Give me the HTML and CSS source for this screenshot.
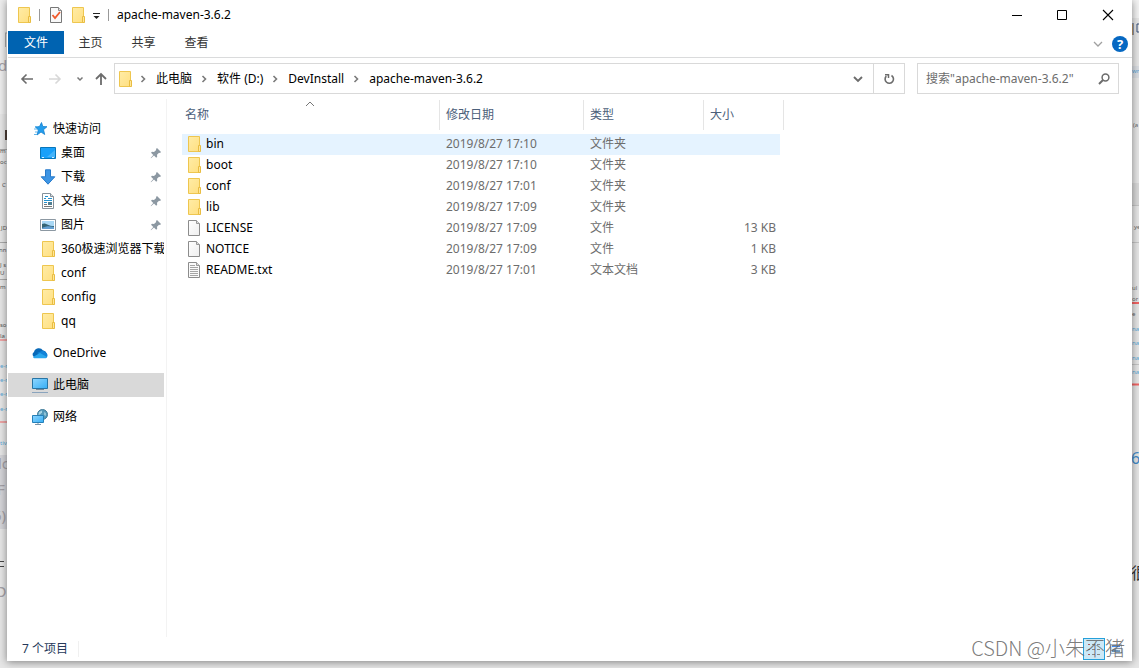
FILE: index.html
```html
<!DOCTYPE html>
<html lang="zh-CN">
<head>
<meta charset="utf-8">
<title>apache-maven-3.6.2</title>
<link rel="stylesheet" href="styles.css">
</head>
<body>
<svg class="defs" aria-hidden="true">
  <defs>
    <linearGradient id="gFolder" x1="0" y1="0" x2="1" y2="1"><stop offset="0" stop-color="#ffeca6"/><stop offset="1" stop-color="#ffdf80"/></linearGradient>
    <linearGradient id="gScreen" x1="0" y1="0" x2="1" y2="1"><stop offset="0" stop-color="#8fd6ff"/><stop offset="1" stop-color="#36aef5"/></linearGradient>
    <linearGradient id="gPage" x1="0" y1="0" x2="1" y2="1"><stop offset="0" stop-color="#fff"/><stop offset="1" stop-color="#eee"/></linearGradient>
    <symbol id="folder" viewBox="0 0 16 16"><path d="M2.500.5h11v9.500l.5 1v4.500h-11.500z" fill="url(#gFolder)" stroke="#eec64f"/><path d="M12.500 15.500v-6h2v6z" fill="#ffe699" stroke="#e9bd42"/></symbol>
    <symbol id="file" viewBox="0 0 16 16"><path d="M2.500.5h8l3 3v12h-11z" fill="url(#gPage)" stroke="#8c8c8c"/><path d="M10.500.5v3h3" fill="#ddd" stroke="#999"/></symbol>
    <symbol id="text" viewBox="0 0 16 16"><path d="M2.500.5h8l3 3v12h-11z" fill="#fafafa" stroke="#8c8c8c"/><path d="M10.500.5v3h3" fill="#ddd" stroke="#999"/><path d="M4 3.500h5M4 5.500h8M4 7.500h8M4 9.500h8M4 11.500h8M4 13.500h8" stroke="#a5a5a5"/></symbol>
    <symbol id="pin" viewBox="0 0 12 12"><path d="M7 1l4 4-1 1-1-.3-2 2 .2 2-1 1L4 8.500 1 11.200.7 11l2.600-3L1 5.700l1-1 2 .2 2.200-2L6 2z" fill="#8c98a2"/></symbol>
    <symbol id="chev" viewBox="0 0 8 8"><path d="M2.500 1l3 3-3 3" fill="none" stroke="#7a7a7a" stroke-width="1.600"/></symbol>
  </defs>
</svg>
<svg class="backdrop" aria-hidden="true">
  <rect width="7" height="114" fill="#ededed"/><path d="M0 149.500h7M0 242.500h7M0 279.500h7" stroke="#aaa"/>
  <rect y="455" width="7" height="74" fill="#d4d4d8"/>
  <g fill="#555" font-size="6"><text x="0" y="153">m</text><text x="0" y="164">oc</text><text x="2" y="187">C</text><text x="1" y="230">JD</text><text x="-1" y="252">nn</text><text x="0" y="267">J s</text><text x="0" y="275">U</text><text x="0" y="289">m</text><text x="0" y="327">so</text><text x="0" y="338">la</text></g>
  <path d="M0 340h7M0 422h7" stroke="#f36464"/>
  <g fill="#56a6d8" font-size="6"><text x="0" y="368">e-r</text><text x="0" y="382">e-r</text><text x="0" y="396">e-r</text><text x="0" y="411">e-r</text><text x="0" y="445">tiv</text></g>
  <g fill="#a5a1a6" font-size="15"><text x="-2" y="71">d</text><text x="-2" y="469">lc</text><text x="-3" y="495">F</text><text x="-7" y="521">6)</text><text x="-3" y="597">Ɔ</text></g>
  <path d="M5.500 33v14M7 33h-2" stroke="#aaa"/><path d="M6 130v10" stroke="#4d3e37" stroke-width="2"/><path d="M0 561.500h4M0 566.500h4" stroke="#444"/>
</svg>
<main class="window">
  <header class="titlebar">
    <svg class="i16"><use href="#folder"/></svg>
    <span class="rule"></span>
    <button class="plain" aria-label="属性"><svg class="i16" viewBox="0 0 16 16"><path d="M2.500.5h8l3 3v12h-11z" fill="#f8f8f8" stroke="#777"/><path d="M10.500.5v3h3" fill="#ddd" stroke="#888"/><path d="M4.500 8l2.500 3 5-6" fill="none" stroke="#f0592a" stroke-width="1.800"/></svg></button>
    <button class="plain newf" aria-label="新建文件夹"><svg class="i16"><use href="#folder"/></svg></button>
    <button class="plain" aria-label="自定义快速访问工具栏"><svg class="more" viewBox="0 0 9 9"><path d="M1 2.500h7" stroke="#222"/><path d="M1.500 5h6L4.500 8z" fill="#222"/></svg></button>
    <span class="rule"></span>
    <h1>apache-maven-3.6.2</h1>
    <div class="caption">
      <button aria-label="最小化"><svg class="i12" viewBox="0 0 12 12"><path d="M1 6.500h10" stroke="#000"/></svg></button>
      <button aria-label="最大化"><svg class="i12" viewBox="0 0 12 12"><path d="M1.500 1.500h9v9h-9z" fill="none" stroke="#000"/></svg></button>
      <button aria-label="关闭"><svg class="i12" viewBox="0 0 12 12"><path d="M1 1l10 10M11 1L1 11" stroke="#000" stroke-width="1.100"/></svg></button>
    </div>
  </header>
  <nav class="tabs">
    <button class="filetab">文件</button><button>主页</button><button>共享</button><button>查看</button>
    <div class="help">
      <button class="plain" aria-label="展开功能区"><svg class="i12" viewBox="0 0 12 12"><path d="M2 4l4 4 4-4" fill="none" stroke="#a0a0a0" stroke-width="1.300"/></svg></button>
      <button class="helpbtn" aria-label="帮助">?</button>
    </div>
  </nav>
  <div class="navrow">
    <div class="arrows">
      <button class="plain" aria-label="后退"><svg class="i14" viewBox="0 0 14 14"><path d="M13 7H2M6.500 2.500L2 7l4.500 4.500" fill="none" stroke="#6c6c6c" stroke-width="1.600"/></svg></button>
      <button class="plain" aria-label="前进" disabled><svg class="i14" viewBox="0 0 14 14"><path d="M1 7h11M7.500 2.500L12 7l-4.500 4.500" fill="none" stroke="#d8d8d8" stroke-width="1.600"/></svg></button>
      <button class="plain" aria-label="最近浏览的位置"><svg class="i8" viewBox="0 0 8 8"><path d="M1.500 2.500l2.500 2.500 2.500-2.500" fill="none" stroke="#777" stroke-width="1.500"/></svg></button>
      <button class="plain" aria-label="上移"><svg class="i14" viewBox="0 0 14 14"><path d="M7 13V2M2 7l5-5 5 5" fill="none" stroke="#6c6c6c" stroke-width="1.800"/></svg></button>
    </div>
    <div class="address">
      <svg class="i16"><use href="#folder"/></svg>
      <svg class="i8"><use href="#chev"/></svg><a href="#pc">此电脑</a>
      <svg class="i8"><use href="#chev"/></svg><a href="#d">软件 (D:)</a>
      <svg class="i8"><use href="#chev"/></svg><a href="#dev">DevInstall</a>
      <svg class="i8"><use href="#chev"/></svg><a href="#maven">apache-maven-3.6.2</a>
      <button class="drop" aria-label="以前的位置"><svg class="i12" viewBox="0 0 12 12"><path d="M2 4l4 4 4-4" fill="none" stroke="#6c6c6c" stroke-width="1.900"/></svg></button>
      <button class="refresh" aria-label="刷新"><svg class="i12" viewBox="0 0 12 12"><path d="M8.500 2.500A4.200 4.200 0 1 1 3.300 3.100" fill="none" stroke="#6c6c6c" stroke-width="1.600"/><path d="M2 1.700h3.500V5" fill="none" stroke="#6c6c6c" stroke-width="1.500"/></svg></button>
    </div>
    <div class="search">
      <input type="text" aria-label="搜索" placeholder='搜索"apache-maven-3.6.2"'>
      <svg class="i12" viewBox="0 0 12 12"><circle cx="7.500" cy="4.500" r="3.400" fill="none" stroke="#6c6c6c" stroke-width="1.500"/><path d="M5 7L1 11" stroke="#6c6c6c" stroke-width="1.900"/></svg>
    </div>
  </div>
  <div class="content">
    <nav class="tree">
      <ul>
        <li><a href="#quick"><svg class="i16" viewBox="0 0 16 16"><path d="M9.500 1.500l1.300 4 4.200.2-3.500 3 1.200 4.800-3.700-2.500-4 3 1.300-5L3.500 6l4-.5z" fill="#239ded" stroke="#1681ce" stroke-width=".8"/><path d="M3 5.500h3M2 8h3M3 11h2M2 13.500h3" stroke="#60b5eb"/></svg>快速访问</a></li>
        <li class="sub"><a href="#desktop"><svg class="i16" viewBox="0 0 16 16"><path d="M.5 2.500h15v11H.5z" fill="#19a0fa" stroke="#0876ba"/><path d="M15 5v7H7z" fill="#45b4fb"/><path d="M2 12.500h2M12 12.500h2" stroke="#d5efff"/></svg>桌面</a><svg class="pin"><use href="#pin"/></svg></li>
        <li class="sub"><a href="#downloads"><svg class="i16" viewBox="0 0 16 16"><path d="M5.500.8h5v7h4.300L8 15.200 1.200 7.800h4.300z" fill="#3d95e4" stroke="#2679ca"/></svg>下载</a><svg class="pin"><use href="#pin"/></svg></li>
        <li class="sub"><a href="#documents"><svg class="i16" viewBox="0 0 16 16"><path d="M2.500.5h8l3 3v12h-11z" fill="#fff" stroke="#84919b"/><path d="M10.500.5v3h3" fill="#ddd" stroke="#84919b"/><path d="M5 3.500h3M4 5.500h2M8 5.500h4M4 7.500h8M4 9.500h3" stroke="#2492cf"/><path d="M8 9h4v3H8z" fill="#507e92"/><path d="M4 11.500h3M4 13.500h8" stroke="#777"/></svg>文档</a><svg class="pin"><use href="#pin"/></svg></li>
        <li class="sub"><a href="#pictures"><svg class="i16" viewBox="0 0 16 16"><path d="M.5 2.500h15v11H.5z" fill="#fff" stroke="#8c98a2"/><path d="M2 4h12v8H2z" fill="#a9d8f5"/><path d="M2 7c4-2 5 2 12 2v3H2z" fill="#356575"/><path d="M2 12v-1c4-2 8-2 12-1v2z" fill="#639fd1"/></svg>图片</a><svg class="pin"><use href="#pin"/></svg></li>
        <li class="sub"><a href="#360"><svg class="i16"><use href="#folder"/></svg>360极速浏览器下载</a></li>
        <li class="sub"><a href="#conf"><svg class="i16"><use href="#folder"/></svg>conf</a></li>
        <li class="sub"><a href="#config"><svg class="i16"><use href="#folder"/></svg>config</a></li>
        <li class="sub"><a href="#qq"><svg class="i16"><use href="#folder"/></svg>qq</a></li>
      </ul>
      <ul><li><a href="#onedrive"><svg class="i16" viewBox="0 0 16 16"><path d="M3 12.500A3 3 0 0 1 2 7a5 5 0 0 1 9-1.500A4 4 0 0 1 13.500 12.500z" fill="#0869b8"/><path d="M5 8l6-2.500A4 4 0 0 1 13.500 7.500 3 3 0 0 1 14 13z" fill="#1183d8"/><path d="M1 12l7-4 7 4c-.5 1-1 1.300-2 1.300H3c-1 0-1.600-.5-2-1.300z" fill="#29a6ed"/></svg>OneDrive</a></li></ul>
      <ul><li class="current"><a href="#pc"><svg class="i16" viewBox="0 0 16 16"><path d="M.5 1.500h15v10H.5z" fill="url(#gScreen)" stroke="#2875a5"/><path d="M4 12.500h8" stroke="#75899a"/><path d="M0 15.500h16" stroke="#8aa4bd"/></svg>此电脑</a></li></ul>
      <ul><li><a href="#network"><svg class="i16" viewBox="0 0 16 16"><circle cx="10.500" cy="5.500" r="5" fill="#5599b9" stroke="#417b98"/><path d="M7 3l3-1.500v2L8 5.500 6.500 6z" fill="#a9d5e4"/><path d="M12 3l2 1v3l-2-1z" fill="#8fc4d8"/><path d="M.5 6.500h11v7H.5z" fill="url(#gScreen)" stroke="#2580b8"/><path d="M6 14v1.500M3 15.500h6" stroke="#7894a8"/></svg>网络</a></li></ul>
    </nav>
    <section class="files">
      <table>
        <colgroup><col class="c-name"><col class="c-date"><col class="c-type"><col class="c-size"></colgroup>
        <thead><tr><th><svg class="sort" viewBox="0 0 10 6"><path d="M1 5l4-4 4 4" fill="none" stroke="#777"/></svg>名称</th><th>修改日期</th><th>类型</th><th>大小</th></tr></thead>
        <tbody>
          <tr class="hover"><td><div class="name"><svg class="i16"><use href="#folder"/></svg>bin</div></td><td>2019/8/27 17:10</td><td>文件夹</td><td></td></tr>
          <tr><td><div class="name"><svg class="i16"><use href="#folder"/></svg>boot</div></td><td>2019/8/27 17:10</td><td>文件夹</td><td></td></tr>
          <tr><td><div class="name"><svg class="i16"><use href="#folder"/></svg>conf</div></td><td>2019/8/27 17:01</td><td>文件夹</td><td></td></tr>
          <tr><td><div class="name"><svg class="i16"><use href="#folder"/></svg>lib</div></td><td>2019/8/27 17:09</td><td>文件夹</td><td></td></tr>
          <tr><td><div class="name"><svg class="i16"><use href="#file"/></svg>LICENSE</div></td><td>2019/8/27 17:09</td><td>文件</td><td>13 KB</td></tr>
          <tr><td><div class="name"><svg class="i16"><use href="#file"/></svg>NOTICE</div></td><td>2019/8/27 17:09</td><td>文件</td><td>1 KB</td></tr>
          <tr><td><div class="name"><svg class="i16"><use href="#text"/></svg>README.txt</div></td><td>2019/8/27 17:01</td><td>文本文档</td><td>3 KB</td></tr>
        </tbody>
      </table>
    </section>
  </div>
  <footer class="status">
    <span class="count">7 个项目</span>
    <div class="views">
      <button class="on" aria-label="详细信息"><svg class="i16" viewBox="0 0 16 16"><path d="M2 3.500h2M2 8.500h2M2 13.500h2" stroke="#a85a5a"/><path d="M6 3.500h3M11 3.500h3M6 8.500h3M11 8.500h3M6 13.500h3M11 13.500h3" stroke="#888"/></svg></button>
      <button aria-label="大缩略图"><svg class="i16" viewBox="0 0 16 16"><path d="M2.500 3.500h11v9h-11z" fill="#e7f0fa" stroke="#a9bacd"/><path d="M4 9c3-2 5 1 8 0v2H4z" fill="#6a92b5"/><path d="M4 5.500h8" stroke="#4388ee"/></svg></button>
    </div>
  </footer>
</main>
<svg class="backdrop" aria-hidden="true">
  <rect width="7" height="18" fill="#f3f3f3"/><rect y="66" width="7" height="12" fill="#dadde2"/><rect y="183" width="7" height="22" fill="#d9d9d9"/>
  <path d="M0 205.500h7M0 242.500h7M0 364.500h7" stroke="#c5c5c5"/>
  <path d="M1 23v12M7 24h-2v8h2" fill="none" stroke="#344d79"/><path d="M0 24v11" stroke="#e79424"/>
  <path d="M0 303h7M0 384.500h7" stroke="#f36464" stroke-width="2"/>
  <g fill="#666" font-size="6"><text x="1" y="127">(a</text><text x="2" y="229">ye</text><text x="0" y="290">ul</text><text x="0" y="301">or</text><text x="0" y="316">e</text></g>
  <g fill="#56a6d8" font-size="6"><text x="0" y="73">wn</text><text x="0" y="331">na</text><text x="0" y="345">na</text><text x="0" y="360">na</text><text x="0" y="374">na</text></g>
  <text x="-1" y="464" font-size="16" fill="#428bc9">6</text><text x="-1" y="579" font-size="16" fill="#333">很</text>
</svg>
<p class="watermark">CSDN @小朱不猪</p>
</body>
</html>
```
FILE: styles.css
```css
* { box-sizing: border-box; }
body {
  margin: 0;
  min-height: 100vh;
  display: grid;
  grid-template-columns: 7px minmax(0, 1fr) 7px;
  position: relative;
  overflow: hidden;
  background: #e6e6e6;
  font: 12px/16px "Noto Sans", "Noto Sans CJK SC", sans-serif;
  color: #000;
}
button { font: inherit; color: inherit; border: 0; padding: 0; background: none; }
a { color: inherit; text-decoration: none; }
svg { display: block; flex: none; }
.defs { position: absolute; width: 0; height: 0; }
.backdrop { width: 7px; height: 100%; overflow: hidden; }
.i8 { width: 8px; height: 8px; }
.i12 { width: 12px; height: 12px; }
.i14 { width: 14px; height: 14px; }
.i16 { width: 16px; height: 16px; }
.plain { display: flex; align-items: center; }

.window {
  position: relative;
  display: flex;
  flex-direction: column;
  margin-bottom: 7px;
  padding-left: 1px;
  background: #fff;
  box-shadow: 0 1px 8px rgba(0, 0, 0, .45);
}

.titlebar { display: flex; align-items: center; height: 31px; padding: 0 0 1px 8px; }
.rule { width: 1px; height: 12px; margin: 0 8px 0 7px; background: #999; }
.newf { margin: 0 6px; }
.more { width: 9px; height: 9px; }
.titlebar h1 { margin: 0; font-size: 12px; font-weight: 400; }
.caption { display: flex; margin-left: auto; }
.caption button { display: grid; place-items: center; width: 45px; height: 30px; }
.caption button:last-child { width: 48px; }

.tabs { display: flex; height: 27px; padding-bottom: 3px; border-bottom: 1px solid #dadbdc; color: #333; }
.tabs > button { width: 53px; padding-top: 1px; }
.tabs .filetab { width: 56px; background: #0063b1; color: #fff; }
.help { display: flex; align-items: center; gap: 8px; margin-left: auto; padding: 2px 4px 0 0; }
.helpbtn { width: 16px; height: 16px; border-radius: 50%; background: #0668c2; color: #fff; font-size: 13px; font-weight: 700; line-height: 16px; }

.navrow { display: flex; align-items: center; height: 41px; padding-right: 13px; }
.arrows { display: flex; align-items: center; justify-content: space-between; width: 106px; padding: 0 6px 0 12px; }
.arrows button:nth-child(2) { margin-left: 4px; }
.arrows button:nth-child(3) { margin-left: 3px; }
.address { display: flex; align-items: center; flex: 1; height: 31px; border: 1px solid #d9d9d9; padding-left: 2px; }
.address > .i8 { margin: 0 9px 0 6px; }
.address > a { margin-right: 2px; }
.drop, .refresh { display: grid; place-items: center; width: 30px; height: 29px; }
.drop { margin-left: auto; }
.refresh { width: 31px; border-left: 1px solid #d9d9d9; }
.search { display: flex; align-items: center; width: 202px; height: 31px; margin-left: 12px; padding: 0 8px; border: 1px solid #d9d9d9; }
.search input { flex: 1; min-width: 0; border: 0; padding: 0; outline: 0; font: inherit; background: none; }
.search input::placeholder { color: #6d6d6d; opacity: 1; }

.content { display: flex; flex: 1; min-height: 0; }
.tree { width: 159px; padding: 18px 2px 0 0; border-right: 1px solid #f3f3f3; }
.tree ul { list-style: none; margin: 0 0 8px; padding: 0; }
.tree li { display: flex; align-items: center; justify-content: space-between; height: 24px; padding-left: 24px; overflow: hidden; }
.tree .sub { padding-left: 32px; }
.tree a { display: flex; align-items: center; gap: 5px; white-space: nowrap; }
.tree .current { background: #d9d9d9; }
.pin { width: 12px; height: 12px; margin-right: 2px; }

.files { flex: 1; padding: 1px 0 0 15px; }
table { table-layout: fixed; width: 602px; border-collapse: separate; border-spacing: 0; color: #6d6d6d; }
.c-name { width: 258px; }
.c-date { width: 144px; }
.c-type { width: 120px; }
.c-size { width: 80px; }
th { position: relative; height: 30px; padding: 0 6px; border-right: 1px solid #e5e5e5; color: #4c607a; font-weight: 400; text-align: left; }
th:first-child { padding-left: 3px; }
.sort { position: absolute; top: 1px; left: calc(50% - 6px); width: 10px; height: 6px; }
tbody::before { content: ""; display: block; height: 4px; }
td { height: 21px; padding: 2px 6px 3px; vertical-align: top; white-space: nowrap; }
td:first-child { padding-left: 4px; color: #000; }
td:last-child { padding-right: 4px; border-right: 4px solid transparent; background-clip: padding-box; text-align: right; }
.hover td { background-color: #e5f3ff; }
.name { display: flex; align-items: center; gap: 4px; }

.status { display: flex; align-items: center; height: 24px; padding: 0 5px 0 14px; color: #26395a; }
.count { padding-right: 10px; border-right: 1px solid #f0f0f0; }
.views { display: flex; margin-left: auto; }
.views button { display: grid; place-items: center; width: 22px; height: 22px; }
.views .on { background: #cce8f6; border: 1px solid #26a0da; }

.watermark {
  position: absolute;
  right: 14px;
  bottom: 6px;
  margin: 0;
  font: 300 20px/28px "Noto Sans CJK SC", sans-serif;
  color: rgba(90, 90, 90, .8);
}
```
